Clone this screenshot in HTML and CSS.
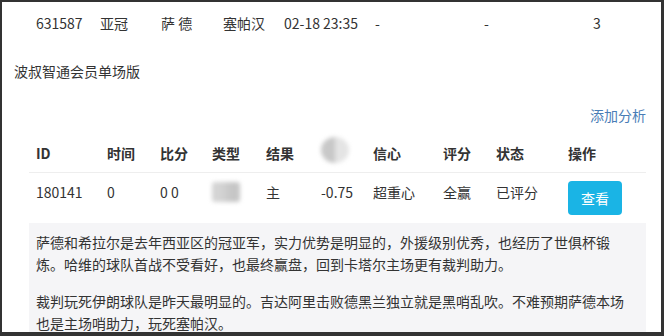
FILE: index.html
```html
<!DOCTYPE html>
<html lang="zh-CN">
<head>
    <meta charset="UTF-8">
    <meta name="viewport" content="width=device-width, initial-scale=1.0">
    <title>波叔智通会员单场版</title>
    <link rel="stylesheet" href="styles.css">
</head>
<body>
    <div class="frame">
        <div class="match-row">
            <span>631587</span>
            <span>亚冠</span>
            <span>萨 德</span>
            <span>塞帕汉</span>
            <span>02-18 23:35</span>
            <span>-</span>
            <span>-</span>
            <span>3</span>
        </div>

        <div class="title">波叔智通会员单场版</div>

        <div class="section">
            <div class="actions"><a href="#">添加分析</a></div>

            <div class="grid head">
                <span>ID</span>
                <span>时间</span>
                <span>比分</span>
                <span>类型</span>
                <span>结果</span>
                <span><i class="blur blur-round"></i></span>
                <span>信心</span>
                <span>评分</span>
                <span>状态</span>
                <span>操作</span>
            </div>
            <div class="grid body">
                <span>180141</span>
                <span>0</span>
                <span>0 0</span>
                <span><i class="blur blur-box"></i></span>
                <span>主</span>
                <span>-0.75</span>
                <span>超重心</span>
                <span>全赢</span>
                <span>已评分</span>
                <span><button>查看</button></span>
            </div>

            <div class="analysis">
                <p>萨德和希拉尔是去年西亚区的冠亚军，实力优势是明显的，外援级别优秀，也经历了世俱杯锻炼。哈维的球队首战不受看好，也最终赢盘，回到卡塔尔主场更有裁判助力。</p>
                <p>裁判玩死伊朗球队是昨天最明显的。吉达阿里击败德黑兰独立就是黑哨乱吹。不难预期萨德本场也是主场哨助力，玩死塞帕汉。</p>
            </div>
        </div>
    </div>
</body>
</html>
```

FILE: styles.css
```css
html, body {
    margin: 0;
    padding: 0;
}
body {
    font-family: "Noto Sans CJK SC", "Noto Sans", sans-serif;
    font-size: 14px;
    line-height: 20px;
    color: #333;
    background: #fff;
}
.frame {
    box-sizing: border-box;
    width: 664px;
    height: 336px;
    overflow: hidden;
    border-style: solid;
    border-color: #333;
    border-width: 2px 3px 4px 2px;
    padding-left: 12px;
}
.match-row {
    display: grid;
    grid-template-columns: 64px 61px 62px 61px 91px 109px 109px 1fr;
    margin-left: 15px;
    padding: 11px 0 0 7px;
    width: 610px;
}
.title {
    margin-top: 28px;
}
.section {
    margin-left: 15px;
    width: 617px;
}
.actions {
    margin-top: 24px;
    text-align: right;
}
.actions a {
    color: #4a7db6;
    text-decoration: none;
}
.grid {
    display: grid;
    grid-template-columns: 71px 53px 52px 54px 55px 52px 70px 53px 72px 1fr;
    padding-left: 7px;
}
.head {
    font-weight: bold;
    padding-top: 18px;
    padding-bottom: 9px;
    border-bottom: 1px solid #eee;
}
.body {
    padding-top: 8px;
    padding-bottom: 8px;
}
.body span {
    padding-top: 1px;
}
.blur {
    display: block;
    background: #c9c9c9;
    filter: blur(2px);
}
.blur-round {
    width: 28px;
    height: 26px;
    margin-top: -6px;
    border-radius: 50%;
    background: linear-gradient(90deg, #c8c8c8 50%, #e4e4e4 50%);
}
.blur-box {
    width: 28px;
    height: 20px;
    border-radius: 3px;
    background: linear-gradient(90deg, #d4d4d4 30%, #c6c6c6 70%);
}
button {
    display: block;
    width: 54px;
    height: 34px;
    margin-top: -1px;
    border: none;
    border-radius: 4px;
    background: #1ab4e5;
    color: #fff;
    font-family: inherit;
    font-size: 14px;
    cursor: pointer;
}
.analysis {
    background: #f5f5f7;
    padding: 8px 20px 0 7px;
    height: 120px;
}
.analysis p {
    margin: 0 0 15px;
    line-height: 22px;
}
```
